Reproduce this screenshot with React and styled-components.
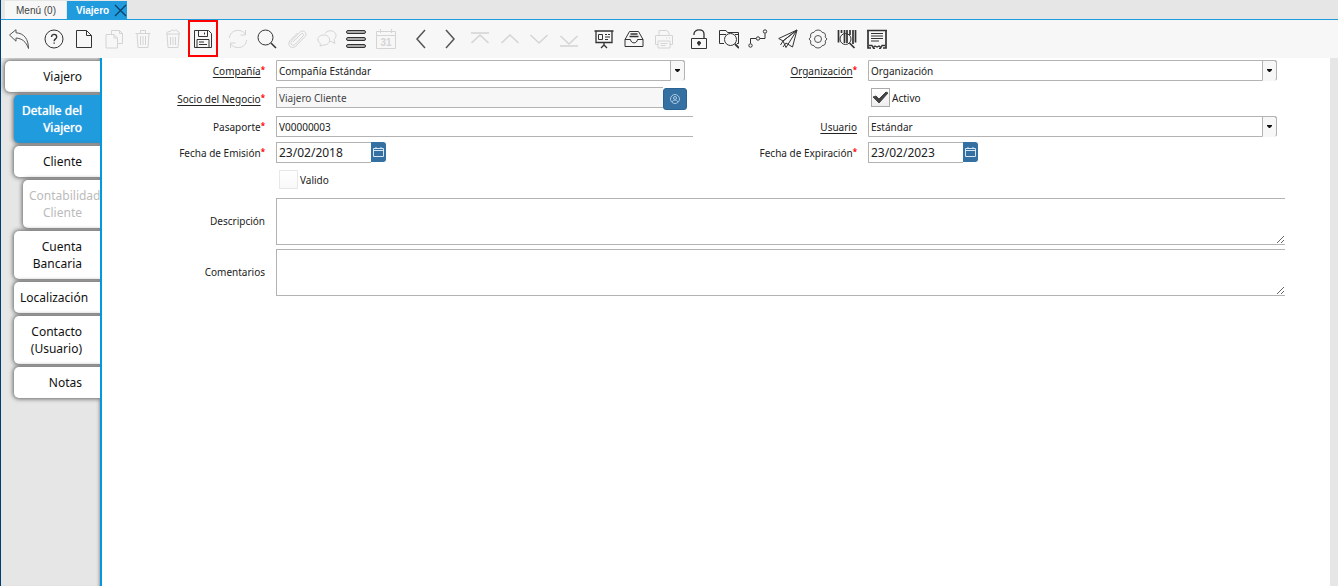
import React from "react";
import styled, { createGlobalStyle } from "styled-components";

const GlobalStyle = createGlobalStyle`
  * {
    box-sizing: border-box;
  }

  body {
    margin: 0;
    font-family: "Noto Sans", sans-serif;
    font-size: 10px;
    color: #222;
  }

  button,
  input,
  select,
  textarea {
    margin: 0;
    font-family: inherit;
  }
`;

const icons = {
  undo: <path d="M.5 6 7 .7v3.1C15 4.2 19.4 10 19.5 19.5 17 12.500 13 9.500 7 9v3.200z" />,
  help: (
    <>
      <circle cx="10" cy="10" r="9" />
      <path d="M7.500 8c0-3.400 5.200-3.400 5.200 0 0 1.900-2.600 1.900-2.600 4.200M10.100 13.500v1.300" strokeWidth="1.300" />
    </>
  ),
  page: <path d="M2.500 1.500h10l5 5v12h-15zM12.500 1.500v5h5" />,
  copy: (
    <>
      <path d="M7.500 5.500v-4h8l3 3v10h-5M15.500 1.500v3h3" />
      <path d="M2 5.500h8l3.500 3.500v10H2zM10 5.500V9h3.500" />
    </>
  ),
  trash: <path d="M2.500 4.500h15M7.500 4.500v-3h5v3M4 4.500l1 14h10l1-14M7.500 7v9M10 7v9M12.500 7v9" />,
  trashFull: <path d="M4 5l1 13.500h10L16 5M3.500 5h13c0-2-1-2.500-2-2.500 0-1.500-2-2-3-.7-1.500-1.300-4-.8-4 .7-2 0-4 .5-4 2.500zM7.500 8v8M10 8v8M12.500 8v8" />,
  save: (
    <>
      <path d="M1.500 1.500h14l3 3v14h-17z" />
      <path d="M5.500 1.500v6h9v-6M11.500 3.500v2M4 18.500v-8h12v8M6 13h5M6 15.500h8" />
    </>
  ),
  refresh: <path d="M1.500 9c0-8 12-10.500 16-3.500M17.500 1v5h-5M18.500 11c0 8-12 10.500-16 3.500M2.500 19v-5h5" />,
  search: (
    <>
      <circle cx="8.500" cy="8.500" r="7.500" />
      <path d="m14 14 5 5" strokeWidth="1.500" />
    </>
  ),
  clip: <path d="M6 13l8-8c1.500-1.500 3.500.5 2 2l-7.500 8c-3 3-6.500-.5-3.500-3.500l7.500-8c3.500-3.500 8.500 0 5.500 4l-9 9.500c-4.500 4-9.500-1-6-5.500L10.500 4" />,
  chat: (
    <>
      <path d="M8 4.500c3-4.700 11-3 11 2 0 2-1 3-2 4l1 4-3.500-2h-2" />
      <path d="M3 17c0-1 .5-1.500.5-2.200C-2 10 2 6 6.700 6c7.800 0 8 10 0 10-1 0-2 .5-3.700 1z" />
    </>
  ),
  rows: (
    <>
      <rect x=".5" y="1.500" width="19" height="3" rx="1.500" fill="#aaa" />
      <rect x=".5" y="8.500" width="19" height="3" rx="1.500" fill="#aaa" />
      <rect x=".5" y="15.500" width="19" height="3" rx="1.500" fill="#aaa" />
    </>
  ),
  calendar: (
    <>
      <path d="M.5 2.500h19v17H.500zM.5 6.500h19M4.500 0v4M15.500 0v4" />
      <text x="10" y="16.500" textAnchor="middle" fontFamily="Liberation Sans, sans-serif" fontSize="10" fontWeight="bold" fill="currentColor" stroke="none">
        31
      </text>
    </>
  ),
  left: <path d="M14 1 6 10l8 9" strokeWidth="1.500" />,
  right: <path d="m6 1 8 9-8 9" strokeWidth="1.500" />,
  first: <path d="M1 4h18M1.500 14 10 6l8.500 8" strokeWidth="1.500" />,
  up: <path d="m1.500 14 8.500-8 8.500 8" strokeWidth="1.500" />,
  down: <path d="m1.500 6 8.500 8 8.500-8" strokeWidth="1.500" />,
  last: <path d="M1 17h18M1.500 7l8.500 8 8.500-8" strokeWidth="1.500" />,
  board: (
    <>
      <path d="M.5 2h19M2 2v11.500h16V2M10 13.500V16M7 19l3-3 3 3" strokeWidth="1.300" />
      <path d="M4.500 5.500h4v5h-4zM11 5.500h2M14 5.500h2M11 8h5M11 10.500h3" />
    </>
  ),
  archive: (
    <>
      <path d="M5.500 2.500h9l4.500 8v7H1v-7zM1 10.500h5.500c.5 4.500 6.500 4.500 7 0H19" />
      <path d="M6.500 5h7M5.500 7.500h9" strokeWidth="1.500" />
    </>
  ),
  print: (
    <>
      <path d="M5 6.500v-5h7.500l2.500 2v3M4 15.500H1.500v-9h17v9H16M4 12h12v7H4z" />
      <path d="M12 9h1M15 9h1M6.500 14.500h7M6.500 16.500h5" />
    </>
  ),
  lock: (
    <>
      <path d="M5 6V5c0-5.500 10-5.500 10 0v4" strokeWidth="1.300" />
      <path d="M2.500 9.500h15v10h-15z" />
      <circle cx="10" cy="14" r="1.500" fill="currentColor" />
      <path d="M10 14v3" />
    </>
  ),
  folder: (
    <>
      <path d="M5 14.500H.500v-13H7l1.500 2h11v11H18M1 5.500h6M16 5.500h3.500" />
      <circle cx="11.500" cy="10.500" r="6" />
      <path d="m16 15 4 4" strokeWidth="1.800" />
    </>
  ),
  flow: (
    <>
      <circle cx="2.500" cy="16.500" r="1.700" />
      <circle cx="10" cy="9.500" r="1.700" />
      <circle cx="17" cy="2.500" r="1.700" />
      <path d="M2.500 14.500v-5H8M12 9.500h5v-5" />
    </>
  ),
  send: <path d="M19 1 .7 9.500 5 12zM5 12l3 6.500L19 1zM8 14l6.500 4L19 1M5 12l-2.500 4M8 14l-3 4" />,
  gear: (
    <>
      <path d="M7.500 1.500 10 1l2.500.5L14 3.300l2.500.7 1 2-.3 2L19 10l-1.800 2 .3 2-1 2-2.500.7-1.500 1.800-2.500.5-2.500-.5L6 16.700 3.500 16l-1-2 .3-2L1 10l1.800-2-.3-2 1-2L6 3.300z" />
      <circle cx="10" cy="10" r="3.500" />
    </>
  ),
  barcode: (
    <>
      <path d="M1.500 1v12.500M16 1v14M18.500 1v12.500" strokeWidth="1.700" />
      <path d="M4.500 1v3M7.500 1v13M10 1v13M13 1v5" strokeWidth="1.700" />
      <circle cx="8.500" cy="10" r="5.500" />
      <path d="m12.500 14 5 5" strokeWidth="1.700" />
    </>
  ),
  receipt: (
    <>
      <path d="M1 1v18h3M19 1v18h-3M0 1.500h20" strokeWidth="1.700" />
      <path d="M2 16.500h3l1 2 2-1.500 2 1 2-1 2 1.500 1-2h3M6 19.500h2M12 19.500h2" strokeWidth="1.300" />
      <path d="M4 4.500h12M4 7h12M4 9.500h12M4 12h8" strokeWidth="1.200" />
    </>
  ),
};

const toolGroups = [
  {
    width: "31px",
    tools: [{ icon: "undo", label: "Deshacer", soft: true }],
  },
  {
    width: "179px",
    tools: [
      { icon: "help", label: "Ayuda" },
      { icon: "page", label: "Nuevo" },
      { icon: "copy", label: "Copiar", disabled: true },
      { icon: "trash", label: "Eliminar", disabled: true },
      { icon: "trashFull", label: "Eliminar selección", disabled: true },
      { icon: "save", label: "Guardar", marked: true },
    ],
  },
  {
    width: "178px",
    tools: [
      { icon: "refresh", label: "Refrescar", disabled: true },
      { icon: "search", label: "Buscar" },
      { icon: "clip", label: "Anexo", disabled: true },
      { icon: "chat", label: "Chat", disabled: true },
      { icon: "rows", label: "Cambiar vista" },
      { icon: "calendar", label: "Historial", disabled: true },
    ],
  },
  {
    width: "178px",
    tools: [
      { icon: "left", label: "Registro padre", soft: true },
      { icon: "right", label: "Registro detalle", soft: true },
      { icon: "first", label: "Primero", disabled: true },
      { icon: "up", label: "Anterior", disabled: true },
      { icon: "down", label: "Siguiente", disabled: true },
      { icon: "last", label: "Último", disabled: true },
    ],
  },
  {
    width: "90px",
    tools: [
      { icon: "board", label: "Informe" },
      { icon: "archive", label: "Archivo" },
      { icon: "print", label: "Imprimir", disabled: true },
    ],
  },
  {
    width: "208px",
    tools: [
      { icon: "lock", label: "Bloquear" },
      { icon: "folder", label: "Visor" },
      { icon: "flow", label: "Flujo de trabajo" },
      { icon: "send", label: "Solicitudes" },
      { icon: "gear", label: "Proceso", soft: true },
      { icon: "barcode", label: "Producto" },
      { icon: "receipt", label: "Exportar" },
    ],
  },
];

const sideTabs = [
  { name: "Viajero", level: 0 },
  { name: "Detalle del Viajero", level: 1, active: true },
  { name: "Cliente", level: 1 },
  { name: "Contabilidad Cliente", level: 2, disabled: true },
  { name: "Cuenta Bancaria", level: 1 },
  { name: "Localización", level: 1 },
  { name: "Contacto (Usuario)", level: 1 },
  { name: "Notas", level: 1 },
];

const Window = styled.div`
  display: flex;
  flex-direction: column;
  min-height: 100vh;
  border-left: 1px solid #003e6f;
  background: #e6e6e6;
`;

const TabBar = styled.nav`
  display: flex;
  gap: 1px;
  height: 20px;
  padding: 1px 4px 0;
  border-bottom: 1px solid #209bde;
`;

const WindowTab = styled.div`
  display: flex;
  align-items: center;
  padding-left: ${(props) => (props.$active ? "9px" : "0")};
  background: ${(props) => (props.$active ? "#209bde" : "#f7f7f7")};
`;

const TabButton = styled.button`
  padding: 0 ${(props) => (props.$active ? "0" : "10px 0 11px")};
  border: none;
  background: none;
  font: ${(props) => (props.$active ? "bold" : "normal")} 10px "Liberation Sans", sans-serif;
  color: ${(props) => (props.$active ? "#fff" : "#444")};
`;

const CloseButton = styled.button`
  display: flex;
  margin-left: 5px;
  padding: 0;
  border: none;
  background: none;
  color: #0a4167;
`;

const Toolbar = styled.div`
  display: flex;
  gap: 5px;
  height: 38px;
  padding: 0 2px;
  background: #f7f7f7;
`;

const ToolGroup = styled.div`
  display: grid;
  grid-template-columns: repeat(${(props) => props.$count}, 1fr);
  width: ${(props) => props.$width};
`;

const ToolButton = styled.button`
  display: flex;
  align-items: center;
  justify-content: center;
  height: ${(props) => (props.$marked ? "37px" : "38px")};
  padding: 0;
  border: ${(props) => (props.$marked ? "2px solid #f00" : "none")};
  background: none;
  color: ${(props) => (props.$soft ? "#555" : "#333")};

  &:disabled {
    color: #d4d4d4;
  }
`;

const Body = styled.div`
  display: flex;
  flex: 1;
`;

const SideBar = styled.nav`
  display: flex;
  flex-direction: column;
  gap: 3px;
  width: 101px;
  padding: 3px 0 0 4px;
  border-right: 2px solid #009bde;
  box-shadow: inset -3px 0 3px -2px #999;
  overflow: hidden;
`;

const SideTab = styled.button`
  margin-left: ${(props) => props.$level * 9}px;
  padding: 7px 18px 7px 6px;
  border: none;
  border-radius: 5px 0 0 5px;
  background: ${(props) => (props.$active ? "#209bde" : "#fff")};
  box-shadow: 0 0 4px 1px #666;
  font-size: 12px;
  line-height: 17px;
  text-align: right;
  color: ${(props) => (props.$active ? "#fff" : "#111")};
  text-shadow: ${(props) => (props.$active ? "0 0 1px #fff" : "none")};

  &:disabled {
    color: #bbb;
  }
`;

const Content = styled.main`
  flex: 1;
  margin-right: 8px;
  background: #fff;
`;

const Form = styled.form`
  display: grid;
  grid-template-columns: 174fr 417fr 175fr 417fr;
  row-gap: 5px;
  align-items: center;
  padding: 2px 45px 0 0;
`;

const Label = styled.label`
  padding-right: 11px;
  line-height: 14px;
  text-align: right;
`;

const LabelLink = styled.a`
  color: inherit;
  text-underline-offset: 2px;
`;

const Required = styled.span`
  font-size: 8px;
  font-weight: bold;
  line-height: 8px;
  vertical-align: 2px;
  color: #f00;
`;

const Combo = styled.div`
  display: flex;
  position: relative;
  margin-right: 8px;
`;

const Select = styled.select`
  width: 100%;
  height: 21px;
  padding: 0 16px 0 2px;
  border: 1px solid #b3b3b3;
  border-radius: 0 3px 3px 0;
  appearance: none;
  background: #fff;
  font-size: 10px;
  color: #222;
`;

const ComboArrow = styled.span`
  display: flex;
  align-items: center;
  justify-content: center;
  position: absolute;
  top: 0;
  right: 0;
  width: 15px;
  height: 21px;
  border: 1px solid #b3b3b3;
  border-bottom-color: #f7f7f7;
  border-radius: 0 3px 3px 0;
  background: #f7f7f7;
  pointer-events: none;
`;

const Input = styled.input`
  width: 100%;
  height: 21px;
  padding: 0 2px;
  border: 1px solid #b3b3b3;
  border-right: none;
  border-radius: 0;
  background: #fff;
  font-size: 10px;
  color: #222;

  &:read-only {
    background: #f7f7f7;
    color: #444;
  }
`;

const SearchField = styled.div`
  display: flex;
  height: 23px;
  margin-right: 6px;
`;

const LookupButton = styled.button`
  display: flex;
  flex: none;
  align-items: center;
  justify-content: center;
  width: 24px;
  height: 22px;
  margin-top: 1px;
  padding: 0;
  border: 1px solid #2a6393;
  border-radius: 3px;
  background: #3470a2;
  color: #a9c8e0;
`;

const DateField = styled.div`
  display: flex;
`;

const DateInput = styled(Input)`
  width: 95px;
  font-size: 12px;
`;

const DateButton = styled.button`
  display: flex;
  align-items: center;
  justify-content: center;
  width: 15px;
  height: 20px;
  padding: 0;
  border: none;
  border-radius: 0 3px 3px 0;
  background: #3470a2;
  color: #d5e5f1;
`;

const CheckField = styled.div`
  display: flex;
  grid-column: ${(props) => props.$column};
  align-items: center;
  gap: 2px;
  height: 25px;
  padding: 0 0 2px 3px;
`;

const CheckBox = styled.input`
  width: 19px;
  height: 19px;
  border: 1px solid ${(props) => (props.checked ? "#aaa" : "#e8e8e8")};
  appearance: none;
  background: linear-gradient(#fff, ${(props) => (props.checked ? "#eee" : "#f9f9f9")});
`;

const CheckMark = styled.span`
  display: flex;
  position: relative;

  svg {
    position: absolute;
    top: 3px;
    left: 1px;
    pointer-events: none;
  }
`;

const TextArea = styled.textarea`
  display: block;
  grid-column: 2 / 5;
  width: 100%;
  height: 47px;
  margin-bottom: -1px;
  border: 1px solid #b3b3b3;
  border-right: none;
  resize: both;
`;

const Icon = ({ name }) => (
  <svg width="20" height="20" viewBox="0 0 20 20" fill="none" stroke="currentColor" aria-hidden="true">
    {icons[name]}
  </svg>
);

const Field = ({ id, text, link, required }) => (
  <Label htmlFor={id}>
    {link ? <LabelLink href="#">{text}</LabelLink> : text}
    {required && <Required>*</Required>}
  </Label>
);

const ComboBox = ({ id, value }) => (
  <Combo>
    <Select id={id} defaultValue={value}>
      <option>{value}</option>
    </Select>
    <ComboArrow>
      <svg width="5" height="3" viewBox="0 0 5 3">
        <path d="M0 0h5v1L3 3H2L0 1z" fill="#111" />
      </svg>
    </ComboArrow>
  </Combo>
);

const DateBox = ({ id, value }) => (
  <DateField>
    <DateInput id={id} defaultValue={value} />
    <DateButton type="button" aria-label="Calendario">
      <svg width="11" height="12" viewBox="0 0 11 12" fill="none" stroke="currentColor">
        <path d="M.5 2.500h10v8H.500zM.5 4.500h10M3 1v2M8 1v2" />
      </svg>
    </DateButton>
  </DateField>
);

const Check = ({ id, text, checked, column }) => {
  const [on, setOn] = React.useState(checked);
  return (
    <CheckField $column={column}>
      <CheckMark>
        <CheckBox type="checkbox" id={id} checked={on} onChange={() => setOn(!on)} />
        {on && (
          <svg width="17" height="13" viewBox="0 0 17 13">
            <path d="m1 6 3-1 3 3 7-7 2 1-9 10z" fill="#444" stroke="#444" />
          </svg>
        )}
      </CheckMark>
      <label htmlFor={id}>{text}</label>
    </CheckField>
  );
};

const App = () => {
  return (
    <Window>
      <GlobalStyle />
      <TabBar>
        <WindowTab>
          <TabButton>Menú (0)</TabButton>
        </WindowTab>
        <WindowTab $active>
          <TabButton $active>Viajero</TabButton>
          <CloseButton aria-label="Cerrar">
            <svg width="13" height="13" viewBox="0 0 13 13" stroke="currentColor" strokeWidth="1.300">
              <path d="m1 1 11 11M12 1 1 12" />
            </svg>
          </CloseButton>
        </WindowTab>
      </TabBar>
      <Toolbar>
        {toolGroups.map((group, index) => (
          <ToolGroup key={index} $count={group.tools.length} $width={group.width}>
            {group.tools.map((tool) => (
              <ToolButton
                key={tool.icon}
                aria-label={tool.label}
                disabled={tool.disabled}
                $marked={tool.marked}
                $soft={tool.soft}
              >
                <Icon name={tool.icon} />
              </ToolButton>
            ))}
          </ToolGroup>
        ))}
      </Toolbar>
      <Body>
        <SideBar>
          {sideTabs.map((tab) => (
            <SideTab key={tab.name} $level={tab.level} $active={tab.active} disabled={tab.disabled}>
              {tab.name}
            </SideTab>
          ))}
        </SideBar>
        <Content>
          <Form>
            <Field id="company" text="Compañía" link required />
            <ComboBox id="company" value="Compañía Estándar" />
            <Field id="org" text="Organización" link required />
            <ComboBox id="org" value="Organización" />

            <Field id="partner" text="Socio del Negocio" link required />
            <SearchField>
              <Input id="partner" defaultValue="Viajero Cliente" readOnly />
              <LookupButton type="button" aria-label="Buscar socio">
                <svg width="10" height="10" viewBox="0 0 10 10" fill="none" stroke="currentColor">
                  <circle cx="5" cy="5" r="4.500" />
                  <circle cx="5" cy="4" r="1.500" />
                  <path d="M2 8c1-2.500 5-2.500 6 0" />
                </svg>
              </LookupButton>
            </SearchField>
            <Check id="active" text="Activo" checked column={4} />

            <Field id="passport" text="Pasaporte" required />
            <Input id="passport" defaultValue="V00000003" />
            <Field id="user" text="Usuario" link />
            <ComboBox id="user" value="Estándar" />

            <Field id="issued" text="Fecha de Emisión" required />
            <DateBox id="issued" value="23/02/2018" />
            <Field id="expires" text="Fecha de Expiración" required />
            <DateBox id="expires" value="23/02/2023" />

            <Check id="valid" text="Valido" checked={false} column="2 / 5" />

            <Field id="description" text="Descripción" />
            <TextArea id="description" />
            <Field id="comments" text="Comentarios" />
            <TextArea id="comments" />
          </Form>
        </Content>
      </Body>
    </Window>
  );
};

export default App;
